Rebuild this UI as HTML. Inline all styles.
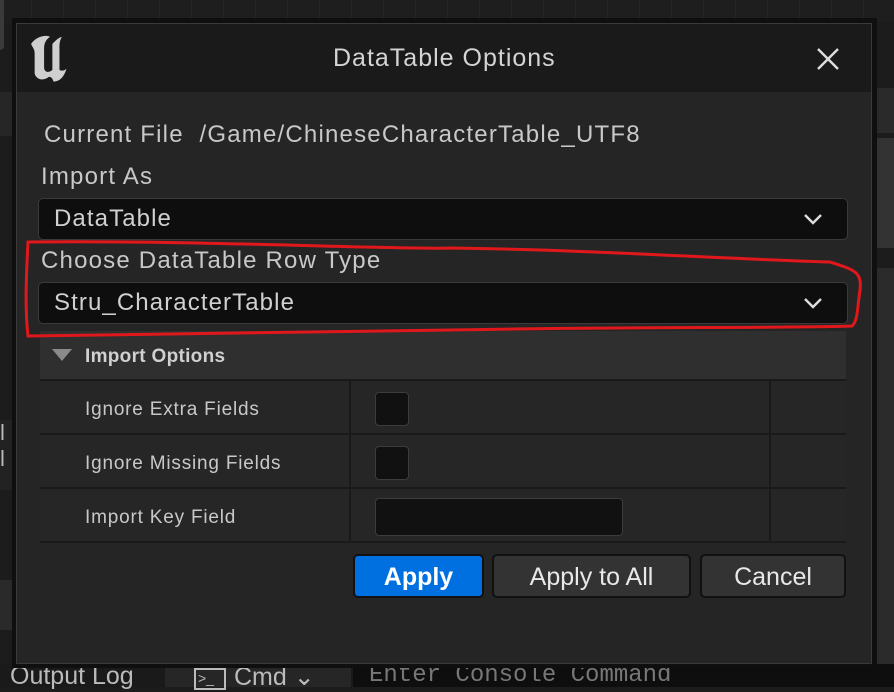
<!DOCTYPE html>
<html><head><meta charset="utf-8"><style>
*{margin:0;padding:0;box-sizing:border-box}
body{width:894px;height:687px;background:#1c1c1c;position:relative;overflow:hidden;font-family:"Liberation Sans",sans-serif;color:#c8c8c8}
.abs{position:absolute}
.dlg{left:12px;top:18px;width:865px;height:650px;background:#0f0f0f}
.inner{left:16px;top:23px;width:856px;height:641px;background:#252525;border:1px solid #3a3a3a}
.title{left:17px;top:24px;width:854px;height:68px;background:#1a1a1a}
.lbl{font-size:24px;color:#c8c8c8;white-space:nowrap;letter-spacing:1.2px}
.dd{left:38px;width:810px;height:42px;background:#0e0e0e;border:1px solid #3a3a3a;border-radius:5px;font-size:24px;color:#d0d0d0;padding:6px 15px;letter-spacing:1.1px}
.chev{position:absolute;right:24px;top:13px}
.row{left:40px;width:806px;height:54px;border-bottom:2px solid #1a1a1a;background:#262626}
.rl{position:absolute;left:45px;top:18px;font-size:19px;color:#c8c8c8;letter-spacing:0.8px}
.cb{position:absolute;left:335px;top:11px;width:34px;height:34px;background:#111;border:1px solid #3c3c3c;border-radius:4px}
.btn{top:554px;height:44px;border-radius:5px;font-size:25px;text-align:center;line-height:42px;color:#e8e8e8;background:#333;border:2px solid #111}
</style></head><body>
<div class="abs" style="left:0;top:0;width:894px;height:22px;background:repeating-linear-gradient(90deg,#1e1e1e 0,#1e1e1e 31px,#262626 31px,#262626 32px)"></div>
<div class="abs" style="left:0;top:0;width:4px;height:50px;background:#3a3a3a;border-radius:0 0 4px 0"></div>
<div class="abs" style="left:0;top:92px;width:14px;height:44px;background:#262626"></div>
<div class="abs" style="left:0;top:420px;width:14px;height:70px;background:#222;color:#bbb;font-size:22px">l<br>l</div>
<div class="abs" style="left:0;top:580px;width:14px;height:50px;background:#2a2a2a"></div>
<div class="abs" style="left:876px;top:88px;width:18px;height:45px;background:#2a2a2a"></div>
<div class="abs" style="left:876px;top:138px;width:18px;height:110px;background:#333"></div>
<div class="abs" style="left:876px;top:268px;width:18px;height:400px;background:#2b2b2b"></div>
<div class="abs" style="left:0;top:664px;width:894px;height:23px;background:#1a1a1a"></div>
<div class="abs" style="left:10px;top:662px;font-size:25px;color:#bbb">Output Log</div>
<div class="abs" style="left:165px;top:664px;width:186px;height:23px;background:#262626"></div>
<div class="abs" style="left:194px;top:668px;width:32px;height:22px;border:2px solid #bbb;font-size:14px;color:#bbb;padding-left:2px">&gt;_</div>
<div class="abs" style="left:234px;top:662px;font-size:25px;color:#bbb">Cmd ⌄</div>
<div class="abs" style="left:353px;top:664px;width:541px;height:23px;background:#0e0e0e"></div>
<div class="abs" style="left:369px;top:662px;font-size:24px;color:#777;font-family:'Liberation Mono',monospace">Enter Console Command</div>

<div class="abs dlg"></div>
<div class="abs inner"></div>
<div class="abs title"></div>
<svg class="abs" style="left:24px;top:32px" width="52" height="52" viewBox="4 2 40 44"><path d="M8 12 C12 6 20 4 24 6 C20 9 19 12 19 16 L19 32 C19 36 23 37 26 34 L26 12 C29 9 31 7 34 6 C32 10 32 12 32 16 L32 34 C34 35 36 35 38 33 C36 40 32 44 27 44 C26 41 25 40 23 40 C18 44 12 42 11 37 L11 20 C11 16 9 15 8 12Z" fill="#cfcfcf"/></svg>
<div class="abs" style="left:333px;top:44px;font-size:25px;color:#d4d4d4;letter-spacing:1px">DataTable Options</div>
<svg class="abs" style="left:816px;top:47px" width="24" height="24"><path d="M2 2L22 22M22 2L2 22" stroke="#ddd" stroke-width="2.4"/></svg>

<div class="abs lbl" style="left:44px;top:121px">Current File&nbsp;&nbsp;/Game/ChineseCharacterTable_UTF8</div>
<div class="abs lbl" style="left:41px;top:163px">Import As</div>
<div class="abs dd" style="top:198px">DataTable<svg class="chev" width="20" height="14"><path d="M2 3L10 11L18 3" stroke="#ddd" stroke-width="2.4" fill="none"/></svg></div>
<div class="abs lbl" style="left:41px;top:247px">Choose DataTable Row Type</div>
<div class="abs dd" style="top:282px">Stru_CharacterTable<svg class="chev" width="20" height="14"><path d="M2 3L10 11L18 3" stroke="#ddd" stroke-width="2.4" fill="none"/></svg></div>

<div class="abs" style="left:40px;top:331px;width:806px;height:50px;background:#2f2f2f;border-bottom:2px solid #1a1a1a"></div>
<svg class="abs" style="left:51px;top:348px" width="22" height="14"><path d="M1 1H21L11 13Z" fill="#8a8a8a"/></svg>
<div class="abs" style="left:85px;top:346px;font-size:19px;font-weight:bold;color:#d0d0d0;letter-spacing:0.3px">Import Options</div>
<div class="abs row" style="top:381px"><div class="rl">Ignore Extra Fields</div><div class="cb"></div></div>
<div class="abs row" style="top:435px"><div class="rl">Ignore Missing Fields</div><div class="cb"></div></div>
<div class="abs row" style="top:489px"><div class="rl">Import Key Field</div><div class="cb" style="width:248px;height:38px;top:9px"></div></div>
<div class="abs" style="left:349px;top:381px;width:2px;height:162px;background:#1a1a1a"></div>
<div class="abs" style="left:769px;top:381px;width:2px;height:162px;background:#1a1a1a"></div>

<div class="abs btn" style="left:353px;width:131px;background:#0070e0;color:#fff;font-weight:bold">Apply</div>
<div class="abs btn" style="left:492px;width:199px">Apply to All</div>
<div class="abs btn" style="left:700px;width:146px">Cancel</div>

<svg class="abs" style="left:0;top:0" width="894" height="687"><path d="M28 242 C200 240 400 250 450 248 C600 250 700 258 830 262 C855 270 862 272 860 290 C857 310 858 320 852 326 C800 328 600 327 450 330 C300 332 150 333 28 336 C25 310 26 280 28 242Z" fill="none" stroke="#e0181c" stroke-width="3"/></svg>
</body></html>
